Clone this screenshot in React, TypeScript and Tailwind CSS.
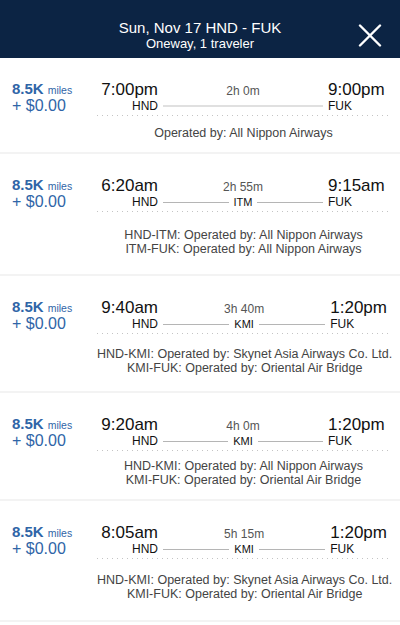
import React from "react";

type Flight = {
  dep: string;
  arr: string;
  dur: string;
  stop?: string;
  ops: string[];
  h: string;
  opMt: string;
};

const flights: Flight[] = [
  { dep: "7:00pm", arr: "9:00pm", dur: "2h 0m", ops: ["Operated by: All Nippon Airways"], h: "h-[96px]", opMt: "mt-[10px]" },
  {
    dep: "6:20am",
    arr: "9:15am",
    dur: "2h 55m",
    stop: "ITM",
    ops: ["HND-ITM: Operated by: All Nippon Airways", "ITM-FUK: Operated by: All Nippon Airways"],
    h: "h-[122px]",
    opMt: "mt-[16px]",
  },
  {
    dep: "9:40am",
    arr: "1:20pm",
    dur: "3h 40m",
    stop: "KMI",
    ops: ["HND-KMI: Operated by: Skynet Asia Airways Co. Ltd.", "KMI-FUK: Operated by: Oriental Air Bridge"],
    h: "h-[117px]",
    opMt: "mt-[13px]",
  },
  {
    dep: "9:20am",
    arr: "1:20pm",
    dur: "4h 0m",
    stop: "KMI",
    ops: ["HND-KMI: Operated by: All Nippon Airways", "KMI-FUK: Operated by: Oriental Air Bridge"],
    h: "h-[108px]",
    opMt: "mt-[8px]",
  },
  {
    dep: "8:05am",
    arr: "1:20pm",
    dur: "5h 15m",
    stop: "KMI",
    ops: ["HND-KMI: Operated by: Skynet Asia Airways Co. Ltd.", "KMI-FUK: Operated by: Oriental Air Bridge"],
    h: "h-[121px]",
    opMt: "mt-[14px]",
  },
];

const FlightRow: React.FC<{ f: Flight }> = ({ f }) => (
  <div className={`flex ${f.h} border-b-2 border-[#f3f3f3]`}>
    <div className="w-[97px] shrink-0 pl-3 pt-[24px] text-[#2f65a7]">
      <div className="leading-[13px]">
        <span className="text-[15px] font-bold">8.5K</span>
        <span className="ml-[4px] text-[10.5px]">miles</span>
      </div>
      <div className="text-[16px] leading-[18px]">+ $0.00</div>
    </div>

    <div className="flex-1 pr-[10px] pt-[23px]">
      <div className="grid grid-cols-[61px_1fr_62px] text-[#111]">
        <div className="flex flex-col items-end">
          <span className="text-[17px] leading-[18px]">{f.dep}</span>
          <span className="text-[12px] leading-[14px]">HND</span>
        </div>
        <div className="flex flex-col px-[5px]">
          <span className="pt-[3px] text-center text-[12px] leading-[15px] text-[#555]">{f.dur}</span>
          <div className="flex h-[14px] items-center">
            {f.stop ? (
              <>
                <div className="h-px flex-1 bg-[#b5b5b5]" />
                <span className="px-[5px] text-[11px] leading-[14px]">{f.stop}</span>
                <div className="h-px flex-1 bg-[#b5b5b5]" />
              </>
            ) : (
              <div className="h-[2px] flex-1 bg-[#e0e0e0]" />
            )}
          </div>
        </div>
        <div className="flex flex-col items-start">
          <span className="text-[17px] leading-[18px]">{f.arr}</span>
          <span className="text-[12px] leading-[14px]">FUK</span>
        </div>
      </div>

      <div className="mt-[2px] h-px bg-[linear-gradient(to_right,#c4c4c4_1px,transparent_1px)] bg-[length:5px_1px]" />

      <div className={`${f.opMt} whitespace-nowrap text-center text-[12.5px] leading-[14px] text-[#444]`}>
        {f.ops.map((o) => (
          <div key={o}>{o}</div>
        ))}
      </div>
    </div>
  </div>
);

export default function App() {
  return (
    <div className="h-[625px] w-[400px] overflow-hidden bg-white font-['Liberation_Sans',Arial,sans-serif]">
      <div className="grid h-[58px] grid-cols-[60px_1fr_60px] bg-[#0c2444] text-white">
        <div />
        <div className="flex flex-col items-center pt-[19px]">
          <span className="text-[15px] leading-[17px]">Sun, Nov 17 HND - FUK</span>
          <span className="text-[13px] leading-[16px]">Oneway, 1 traveler</span>
        </div>
        <div className="flex items-center justify-center pt-[13px]">
          <svg width="24" height="23" viewBox="0 0 24 23" fill="none" stroke="white" strokeWidth="2.4" strokeLinecap="round">
            <path d="M2 1.5 L22 21.5" />
            <path d="M22 1.5 L2 21.5" />
          </svg>
        </div>
      </div>

      {flights.map((f, i) => (
        <FlightRow key={i} f={f} />
      ))}
    </div>
  );
}
